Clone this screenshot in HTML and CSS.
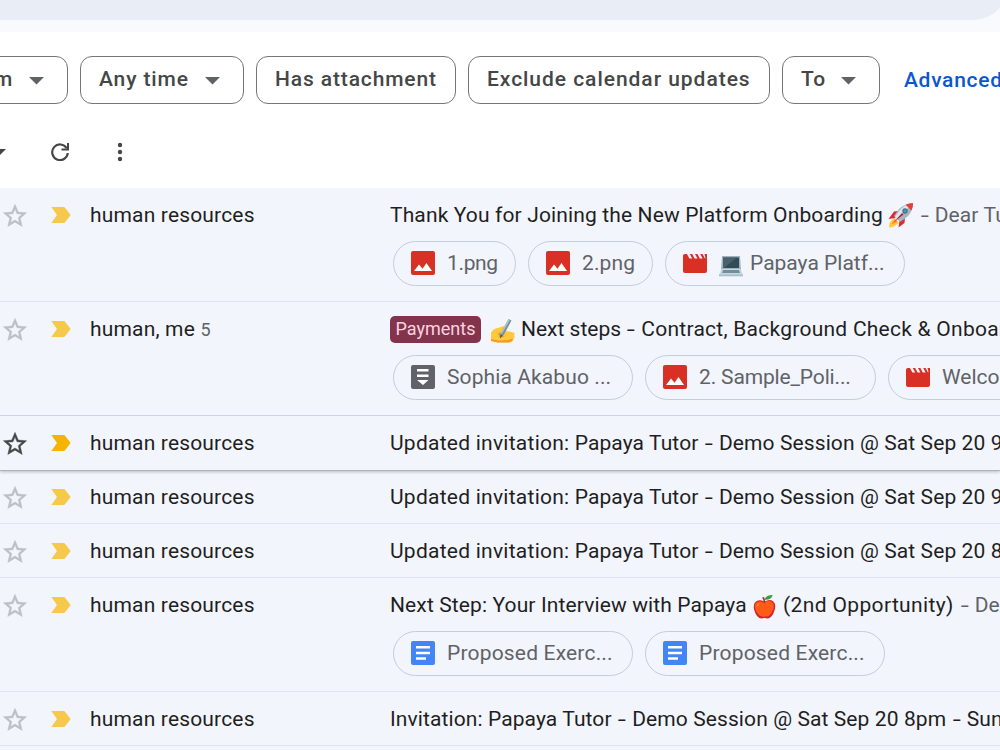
FILE: index.html
```
<!DOCTYPE html>
<html lang="en">
<head>
<meta charset="utf-8">
<title>Mail search</title>
<link rel="stylesheet" href="styles.css">
</head>
<body>
<svg class="defs" width="0" height="0">
  <symbol id="star" viewBox="0 0 24 24"><path d="M22 9.24l-7.19-.62L12 2 9.19 8.63 2 9.24l5.46 4.73L5.82 21 12 17.27 18.18 21l-1.63-7.03L22 9.24zM12 15.4l-3.76 2.27 1-4.28-3.32-2.88 4.38-.38L12 6.1l1.71 4.04 4.38.38-3.32 2.88 1 4.28L12 15.4z"/></symbol>
  <symbol id="mark" viewBox="0 0 20 16"><path d="M.3 0H12.6Q13.5 0 14.1.7L19.6 8 14.1 15.2Q13.5 16 12.6 16H.3L6 8z"/></symbol>
  <symbol id="caret" viewBox="0 0 15 8"><path d="M0 0H15L7.5 7.6z"/></symbol>
  <symbol id="image" viewBox="0 0 24 24"><rect width="24" height="24" rx="2" fill="#d93025"/><path fill="#fff" d="M3 20l5-6.4 3.5 4.1L15.5 12 21 20z"/></symbol>
  <symbol id="video" viewBox="0 0 24 24"><path fill="#d93025" d="M2 3h2l2.400 4.500h2.800L6.800 3h2.400l2.400 4.500h2.800L12 3h2.400l2.400 4.500h2.800L17.200 3h2.400l2.200 4.200h.7L21.500 3H24v17a2 2 0 0 1-2 2H2a2 2 0 0 1-2-2V4.500Q0 3 2 3z"/></symbol>
  <symbol id="doc" viewBox="0 0 24 24"><rect width="24" height="24" rx="2" fill="#4285f4"/><path fill="#fff" d="M5 5h14v2.500H5zM5 10.700h14v2.500H5zM5 16.300h10v2.500H5z"/></symbol>
  <symbol id="file" viewBox="0 0 24 24"><rect width="24" height="24" rx="2" fill="#5f6368"/><path fill="#fff" d="M6 4h11.500v2.500H6zM6 9.500h11.500V12H6zM6 15h11.500L12 20z"/></symbol>
</svg>

<header class="top"><div class="search"></div></header>

<main class="panel">
  <nav class="filters">
    <button class="filter from"><span>From</span><svg class="caret"><use href="#caret"/></svg></button>
    <button class="filter time"><span>Any time</span><svg class="caret"><use href="#caret"/></svg></button>
    <button class="filter attach"><span>Has attachment</span></button>
    <button class="filter exclude"><span>Exclude calendar updates</span></button>
    <button class="filter to"><span>To</span><svg class="caret"><use href="#caret"/></svg></button>
    <a class="advanced">Advanced search</a>
  </nav>

  <div class="toolbar">
    <svg class="drop" viewBox="0 0 12 6"><path d="M0 0H12L6 6z"/></svg>
    <svg class="refresh" viewBox="0 0 18 18"><path d="M15.700 5.200A7.800 7.800 0 1 0 16.800 10" fill="none" stroke="#444746" stroke-width="2.200"/><path d="M18 0v7.600h-7.500V5.500H16V0z"/></svg>
    <svg class="more" viewBox="0 0 6 20"><circle cx="3" cy="3" r="2.200"/><circle cx="3" cy="10" r="2.200"/><circle cx="3" cy="17" r="2.200"/></svg>
  </div>

  <section class="list">
    <article class="row">
      <svg class="star"><use href="#star"/></svg><svg class="mark"><use href="#mark"/></svg>
      <div class="sender">human resources</div>
      <div class="body">
        <div class="line"><span class="subject s-thank">Thank You for Joining the New Platform Onboarding</span>
          <svg class="emoji rocket" viewBox="0 0 26 26"><path fill="#ffc83d" d="M6 16l5 5-6 4-4 .5L1.500 21z"/><path fill="#ff822d" d="M7 17l2.500 2.500-6 3z"/><path fill="#d72e36" d="M10 9l-4 .5-5.500 7.500 7-1zM17 16l-.5 5-6 4.500 1-7z"/><path fill="#a4b6c2" d="M24.500 1.500Q25 9 19.500 14.500L12 20 6 14l5-7Q17 1.500 24.500 1.500z"/><path fill="#dce5ec" d="M21 2Q15 4 11 9l-4 6 2 2L22 4z"/><path fill="#e23e3a" d="M25 1Q25.200 5 23.500 8.500L17.500 2.700Q21 1 25 1z"/><circle cx="17" cy="9" r="2.700" fill="#536e7c"/><circle cx="17" cy="9" r="1.500" fill="#26a6d1"/><path fill="#b71c2b" d="M14 11l1.500 1.500L6 20z"/></svg>
          <span class="snippet"><span class="dash first">-</span> Dear Tutor, welcome</span></div>
        <div class="chips">
          <div class="chip w123"><svg><use href="#image"/></svg><span class="c-png">1.png</span></div>
          <div class="chip w125"><svg><use href="#image"/></svg><span class="c-png two">2.png</span></div>
          <div class="chip w240"><svg><use href="#video"/></svg><svg class="laptop" viewBox="0 0 24 21"><path fill="#9fb3bf" d="M3 0h18l1 14H2z"/><path fill="#324b58" d="M4 1.500h16v10.500H4z"/><path fill="#49616c" d="M4 1.500h14L5 12H4z"/><path fill="#c7d7e2" d="M2.500 13h19L24 19H0z"/><path fill="#758d9b" d="M4 14h16l1 3H3z"/><path fill="#a9bdca" d="M0 18.500h24v1.800H0z"/></svg><span>Papaya Platf...</span></div>
        </div>
      </div>
    </article>

    <article class="row">
      <svg class="star"><use href="#star"/></svg><svg class="mark"><use href="#mark"/></svg>
      <div class="sender">human, me <span class="count">5</span></div>
      <div class="body">
        <div class="line"><span class="tag">Payments</span>
          <svg class="emoji hand" viewBox="0 0 24 24"><path fill="#ffc83d" d="M0 14Q2 9.500 7 9l6-2 1 2.500-4 3.500 6-1 6.500 1.500q2 1.500.5 3 1.500 2-.5 3 .5 3-2 3-1 1-5 1H7l-7-1.500z"/><path fill="#f29b25" d="M0 20l7 1.500 10-.5 5-1.500-1 2.500q-1 1.500-5 1.500H7L0 22zM7 14l5-1-2 3.500q3 1 6-.5-4 3-8 2z"/><path fill="#78909c" d="M17.500 0l3 1.500-7.500 14-4 4 .6-5z"/><path fill="#b0c4d2" d="M17.500 0l1.500.7-8 14-1.400 0z"/><path fill="#455a64" d="M9.600 15.500l2 1-2.600 3z"/></svg>
          <span class="subject s-next">Next steps <span class="dash">-</span> <span class="wide">Contract, Background Check &amp; Onboarding</span></span></div>
        <div class="chips">
          <div class="chip w240"><svg><use href="#file"/></svg><span class="c-sophia">Sophia Akabuo ...</span></div>
          <div class="chip w231"><svg><use href="#image"/></svg><span class="c-sample">2. Sample_Poli...</span></div>
          <div class="chip w240"><svg><use href="#video"/></svg><span>Welcome to P...</span></div>
        </div>
      </div>
    </article>

    <article class="row short hovered">
      <svg class="star"><use href="#star"/></svg><svg class="mark"><use href="#mark"/></svg>
      <div class="sender">human resources</div>
      <div class="body"><div class="line"><span class="subject"><span class="wide">Updated invitation:</span> Papaya Tutor <span class="dash">-</span> Demo Session @ Sat Sep 20 9pm</span></div></div>
    </article>

    <article class="row short">
      <svg class="star"><use href="#star"/></svg><svg class="mark"><use href="#mark"/></svg>
      <div class="sender">human resources</div>
      <div class="body"><div class="line"><span class="subject"><span class="wide">Updated invitation:</span> Papaya Tutor <span class="dash">-</span> Demo Session @ Sat Sep 20 9pm</span></div></div>
    </article>

    <article class="row short">
      <svg class="star"><use href="#star"/></svg><svg class="mark"><use href="#mark"/></svg>
      <div class="sender">human resources</div>
      <div class="body"><div class="line"><span class="subject"><span class="wide">Updated invitation:</span> Papaya Tutor <span class="dash">-</span> Demo Session @ Sat Sep 20 8pm</span></div></div>
    </article>

    <article class="row">
      <svg class="star"><use href="#star"/></svg><svg class="mark"><use href="#mark"/></svg>
      <div class="sender">human resources</div>
      <div class="body">
        <div class="line"><span class="subject s-step">Next Step: Your Interview with Papaya</span>
          <svg class="emoji apple" viewBox="0 0 24 26"><path fill="#d9202b" d="M12 8Q17 4.500 21 7.500 24.500 11 22.500 17 20 25.500 15 25.500q-3-1-6 0Q4 25.500 1.500 17.500-.8 9.500 4.500 7 8 5.800 12 8z"/><path fill="#ff5a16" d="M12 9Q16 5.500 19.500 8q3.500 3 1.500 8-3 8-8 7.500-7 1-10-6Q0 10 5 8q3.500-1 7 1z"/><path fill="#8d3b2a" d="M11 9Q11 5 9.500 3.500l2-.5Q13 6 12.600 9z"/><path fill="#3f9c45" d="M12 6Q13 1 20.500 1 19.500 6.500 12 6z"/><path fill="#ff8b3d" d="M4 12q1-2.500 3-2.500-1 3-3 4z"/></svg>
          <span class="subject s-opp">(2nd Opportunity)</span>
          <span class="snippet"><span class="dash first">-</span> Dear Tutor</span></div>
        <div class="chips">
          <div class="chip w240"><svg><use href="#doc"/></svg><span class="c-prop">Proposed Exerc...</span></div>
          <div class="chip w240"><svg><use href="#doc"/></svg><span class="c-prop">Proposed Exerc...</span></div>
        </div>
      </div>
    </article>

    <article class="row short">
      <svg class="star"><use href="#star"/></svg><svg class="mark"><use href="#mark"/></svg>
      <div class="sender">human resources</div>
      <div class="body"><div class="line"><span class="subject">Invitation: Papaya Tutor <span class="dash">-</span> Demo Session @ Sat Sep 20 8pm <span class="dash">-</span> Sun Sep 21</span></div></div>
    </article>
    <div class="row next"></div>
  </section>
</main>
</body>
</html>
```

FILE: styles.css
```
* { box-sizing: border-box; }

html, body { height: 750px; overflow: hidden; }

body {
  margin: 0;
  background: #f8fafd;
  color: #1f1f1f;
  font: 21px/54px Roboto, "Liberation Sans", sans-serif;
  white-space: nowrap;
}

svg { display: block; flex: none; }
.defs { position: absolute; }

.top { display: flex; align-items: flex-end; height: 32px; padding-bottom: 12px; overflow: hidden; }
.search { flex: none; width: 1045px; height: 72px; margin-left: -36px; background: #e9eef6; border-radius: 36px; }

.panel { background: #fff; width: 1000px; height: 718px; overflow: hidden; }

/* Filter chips */
.filters { display: flex; gap: 12px; padding-top: 24px; height: 96px; margin-left: -52px; width: 1300px; }
.filter {
  display: flex;
  align-items: center;
  justify-content: space-between;
  flex: none;
  height: 48px;
  padding: 0 23px 3px 18px;
  border: 1px solid #747775;
  border-radius: 12px;
  background: #fff;
  color: #444746;
  font: 500 21px Roboto, sans-serif;
}
.filter span { letter-spacing: .87px; }
.from { width: 120px; }
.from span { margin-left: -6px; }
.time { width: 164px; }
.attach { width: 200px; }
.exclude { width: 302px; }
.exclude span { letter-spacing: .96px; }
.to { width: 98px; }
.caret { width: 15px; height: 8px; fill: #5f6368; margin-top: 4px; }
.advanced { margin-left: 12px; line-height: 48px; font-weight: 500; color: #0b57d0; letter-spacing: .7px; }

/* Toolbar */
.toolbar { display: flex; align-items: center; height: 60px; padding-bottom: 12px; fill: #444746; }
.drop { width: 12px; height: 6px; margin-left: -6px; }
.refresh { width: 18px; height: 18px; margin-left: 45px; }
.more { width: 6px; height: 20px; margin-left: 48px; }

/* Message list */
.row {
  display: grid;
  grid-template-columns: 51px 39px 300px 1fr;
  height: 114px;
  background: #f2f5fc;
  border-bottom: 1px solid #dfe5ee;
}
.short { height: 54px; }
.next { height: 4px; border: 0; }
.hovered {
  position: relative;
  border-bottom-color: #f2f5fc;
  box-shadow: 0 -1px 0 #cfd5de, 0 1px 0 #b0b4ba, 0 2px 3px rgba(60, 64, 67, .3);
}
.star { width: 28px; height: 28px; margin: 14px 0 0 1px; fill: #bcbfc3; stroke: #bcbfc3; stroke-width: .35px; }
.mark { width: 20px; height: 16px; margin-top: 19px; fill: #f6c84b; }
.hovered .star { fill: #444746; stroke: #444746; }
.hovered .mark { fill: #f5b400; }
.sender { letter-spacing: .17px; }
.count { font-size: 18px; color: #5f6368; }
.body { min-width: 0; overflow: hidden; }
.line { display: flex; height: 53px; }
.subject, .snippet { flex: none; letter-spacing: .1px; }
.snippet { color: #5f6368; }
.dash { display: inline-block; margin: 0 2px; transform: scaleX(1.4); }
.first { margin-left: 2.500px; }
.wide { letter-spacing: .25px; }
.s-next { letter-spacing: 0; }
.s-thank { width: 499px; letter-spacing: .135px; }
.rocket { width: 26px; height: 26px; margin: 14px 5px 0 -1px; }
.tag {
  flex: none;
  width: 91px;
  height: 27px;
  margin-top: 14px;
  border-radius: 5px;
  background: #83334c;
  color: #fbd3e0;
  font-size: 18px;
  line-height: 26px;
  text-align: center;
}
.hand { width: 24px; height: 24px; margin: 17px 6px 0 10px; }
.s-step { width: 363px; letter-spacing: .12px; }
.apple { width: 23px; height: 25px; margin: 16px 7px 0 0; }
.s-opp { width: 176px; letter-spacing: .36px; }

/* Attachment chips */
.chips { display: flex; gap: 12px; padding-left: 3px; }
.chip {
  display: flex;
  align-items: center;
  flex: none;
  gap: 12px;
  height: 45px;
  padding: 0 0 1px 17px;
  border: 1.500px solid #c2ced8;
  border-radius: 23px;
  line-height: 43px;
  color: #5f6368;
}
.chip svg { width: 24px; height: 24px; }
.chip .laptop { height: 21px; margin: 6px -5px 0 0; }
.c-png { letter-spacing: -.35px; }
.two { letter-spacing: .1px; }
.c-sophia { letter-spacing: .1px; }
.c-sample { letter-spacing: -.15px; }
.c-prop { letter-spacing: .18px; }
.w123 { width: 123px; }
.w125 { width: 125px; }
.w231 { width: 231px; }
.w240 { width: 240px; }
```
